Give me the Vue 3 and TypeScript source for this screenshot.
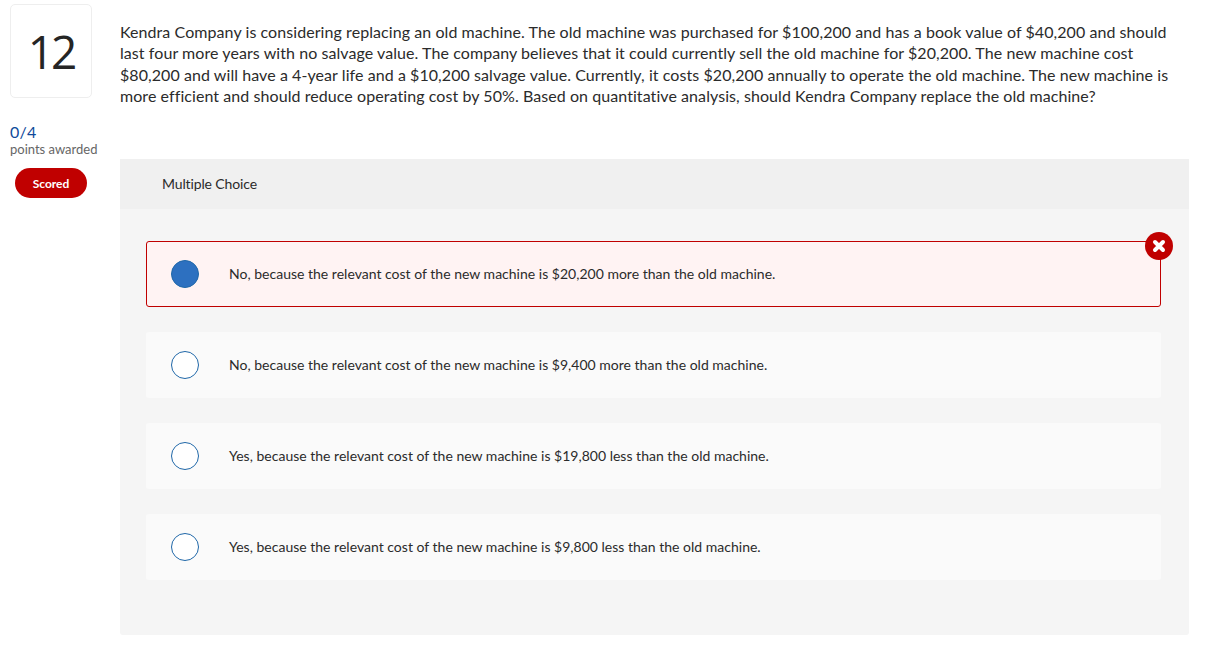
<script setup lang="ts">
import { ref } from 'vue'

interface Choice {
  text: string
  selected?: boolean
}

const question = ref(
  'Kendra Company is considering replacing an old machine. The old machine was purchased for $100,200 and has a book value of $40,200 and should last four more years with no salvage value. The company believes that it could currently sell the old machine for $20,200. The new machine cost $80,200 and will have a 4-year life and a $10,200 salvage value. Currently, it costs $20,200 annually to operate the old machine. The new machine is more efficient and should reduce operating cost by 50%. Based on quantitative analysis, should Kendra Company replace the old machine?'
)

const choices = ref<Choice[]>([
  { text: 'No, because the relevant cost of the new machine is $20,200 more than the old machine.', selected: true },
  { text: 'No, because the relevant cost of the new machine is $9,400 more than the old machine.' },
  { text: 'Yes, because the relevant cost of the new machine is $19,800 less than the old machine.' },
  { text: 'Yes, because the relevant cost of the new machine is $9,800 less than the old machine.' }
])
</script>

<template>
  <div class="page">
    <aside class="side">
      <div class="number">12</div>
      <div class="points">0/4</div>
      <div class="awarded">points awarded</div>
      <div class="scored">Scored</div>
    </aside>
    <main class="main">
      <p class="question">{{ question }}</p>
      <section class="panel">
        <div class="panel-head">Multiple Choice</div>
        <div class="panel-body">
          <div
            v-for="(choice, index) in choices"
            :key="index"
            class="choice"
            :class="{ wrong: choice.selected }"
          >
            <span class="radio" :class="{ on: choice.selected }"></span>
            <span class="label">{{ choice.text }}</span>
            <svg v-if="choice.selected" class="mark" viewBox="0 0 28 28" width="28" height="28">
              <circle cx="14" cy="14" r="14" fill="#c00000" />
              <path d="M10 10l8 8M18 10l-8 8" stroke="#fff" stroke-width="4" stroke-linecap="round" />
            </svg>
          </div>
        </div>
      </section>
    </main>
  </div>
</template>

<style scoped>
.page {
  display: flex;
  width: 1230px;
  height: 648px;
  box-sizing: border-box;
  padding: 4px 41px 13px 10px;
  font-family: Lato, "Open Sans", sans-serif;
  color: #2b2b2b;
}
.side {
  width: 110px;
  flex-shrink: 0;
}
.number {
  width: 82px;
  height: 94px;
  box-sizing: border-box;
  border: 1px solid #eeeeee;
  border-radius: 5px;
  display: flex;
  align-items: center;
  justify-content: center;
  font-family: "Open Sans", sans-serif;
  font-size: 46px;
  letter-spacing: -3px;
  color: #252525;
}
.points {
  margin-top: 24px;
  font-size: 16px;
  line-height: 20px;
  letter-spacing: 0.3px;
  color: #0f4a9a;
}
.awarded {
  font-size: 13px;
  line-height: 15px;
  color: #666666;
  white-space: nowrap;
}
.scored {
  margin: 11px 0 0 5px;
  width: 72px;
  height: 30px;
  border-radius: 15px;
  background: #c00000;
  color: #ffffff;
  font-size: 12px;
  font-weight: 700;
  display: flex;
  align-items: center;
  justify-content: center;
}
.main {
  flex: 1;
  min-width: 0;
}
.question {
  margin: 17px 0 0;
  height: 138px;
  font-size: 16px;
  line-height: 21.3px;
  letter-spacing: 0.07px;
}
.panel {
  height: 476px;
  display: flex;
  flex-direction: column;
  background: #f5f5f5;
  border-radius: 3px;
}
.panel-head {
  height: 50px;
  flex-shrink: 0;
  box-sizing: border-box;
  padding: 0 0 2px 42px;
  display: flex;
  align-items: center;
  background: #f0f0f0;
  font-size: 14px;
  letter-spacing: -0.13px;
}
.panel-body {
  display: flex;
  flex-direction: column;
  gap: 25px;
  padding: 32px 28px 0 26px;
}
.choice {
  position: relative;
  height: 66px;
  box-sizing: border-box;
  padding-left: 24px;
  display: flex;
  align-items: center;
  border: 1px solid transparent;
  border-radius: 3px;
  background: #fafafa;
}
.choice.wrong {
  background: #fff3f3;
  border-color: #c00000;
}
.radio {
  width: 28px;
  height: 28px;
  box-sizing: border-box;
  border: 1px solid #1f67a8;
  border-radius: 50%;
  background: #ffffff;
  flex-shrink: 0;
}
.radio.on {
  background: #2d70c0;
}
.label {
  margin: -2px 0 0 30px;
  font-size: 14px;
  letter-spacing: 0.01px;
}
.mark {
  position: absolute;
  top: -10px;
  right: -13px;
}
</style>
